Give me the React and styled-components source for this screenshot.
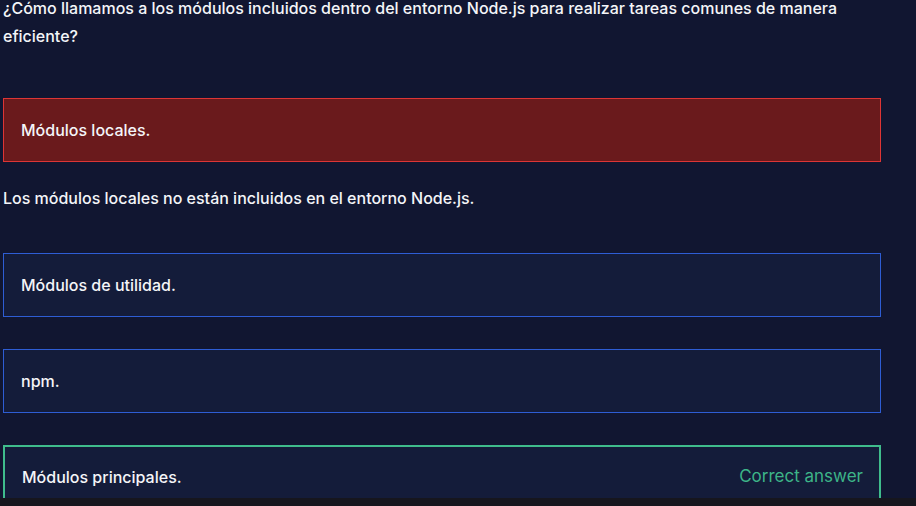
import styled, { createGlobalStyle } from 'styled-components';

const GlobalStyle = createGlobalStyle`
    html, body {
        margin: 0;
        padding: 0;
        background: #111631;
    }
    body {
        font-family: Inter, "Noto Sans", sans-serif;
        color: #f4f5f8;
    }
`

const options = [
    { text: 'Módulos locales.', state: 'wrong', note: 'Los módulos locales no están incluidos en el entorno Node.js.' },
    { text: 'Módulos de utilidad.', state: 'idle' },
    { text: 'npm.', state: 'idle' },
    { text: 'Módulos principales.', state: 'correct' },
]

export default function App() {
    return (
        <Page>
            <GlobalStyle />
            <Viewport>
                <Quiz>
                    <Question>
                        ¿Cómo llamamos a los módulos incluidos dentro del entorno Node.js para realizar tareas comunes de manera eficiente?
                    </Question>
                    {options.map((o) => (
                        <Block key={o.text}>
                            <Option state={o.state}>
                                <span>{o.text}</span>
                                {o.state === 'correct' && <Correct>Correct answer</Correct>}
                            </Option>
                            {o.note && <Note>{o.note}</Note>}
                        </Block>
                    ))}
                </Quiz>
            </Viewport>
            <Strip />
        </Page>
    )
}

const Page = styled.div`
    height: 100vh;
    display: flex;
    flex-direction: column;
    overflow: hidden;
`
const Viewport = styled.div`
    flex: 1;
    overflow: hidden;
`
const Quiz = styled.div`
    width: 878px;
    margin: -6px 0 0 3px;
    display: flex;
    flex-direction: column;
`
const Question = styled.div`
    font-size: 16px;
    font-weight: 500;
    line-height: 28px;
    margin-bottom: 48px;
`
const Block = styled.div`
    display: flex;
    flex-direction: column;
    margin-bottom: 32px;
`
const Option = styled.div`
    box-sizing: border-box;
    height: 64px;
    display: flex;
    align-items: center;
    justify-content: space-between;
    padding: 0 16px 0 17px;
    font-size: 16px;
    font-weight: 500;
    background-color: ${p => p.state === 'wrong' ? '#6a1a1c' : '#141c3a'};
    border: ${p => p.state === 'correct' ? '2px solid #3fbc8c' : p.state === 'wrong' ? '1px solid #de3535' : '1px solid #2e5dd4'};
`
const Correct = styled.span`
    font-size: 17px;
    font-weight: 400;
    color: #3db488;
    margin-top: -2px;
`
const Note = styled.div`
    font-size: 16px;
    font-weight: 500;
    line-height: 28px;
    margin: 22px 0 9px;
`
const Strip = styled.div`
    height: 8px;
    flex-shrink: 0;
    background: #16161e;
`
